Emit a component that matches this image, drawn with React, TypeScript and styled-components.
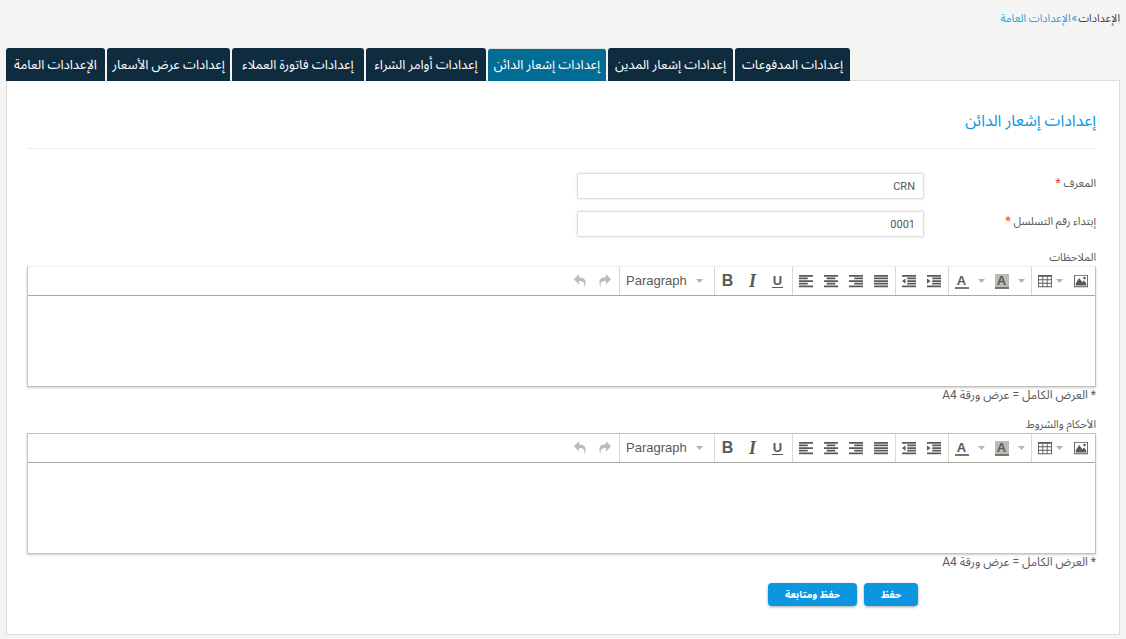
import React from "react";
import styled, { createGlobalStyle, css } from "styled-components";

const ink = "#595959";
const blue = "#0d96e0";

const GlobalStyle = createGlobalStyle`
  * { box-sizing: border-box; }
  body {
    margin: 0;
    background: #f4f4f2;
    color: ${ink};
    font-family: Roboto, "Noto Sans Arabic", "DejaVu Sans Condensed", "DejaVu Sans", sans-serif;
    font-size: 11px;
    line-height: 16px;
  }
  button, input, select, textarea { font: inherit; color: inherit; margin: 0; }
`;

const Page = styled.div`
  padding: 10px 6px 4px;
`;

const Breadcrumb = styled.nav`
  height: 38px;
  white-space: nowrap;
`;

const Crumb = styled.a<{ $current?: boolean }>`
  color: ${(p) => (p.$current ? "#2f9fe0" : "#444")};
  text-decoration: none;
`;

const Chevron = styled.span`
  color: #4a78c8;
  margin: 0 1px;
  font-size: 12px;
`;

const Tabs = styled.nav`
  display: flex;
  direction: ltr;
  gap: 2px;
  position: relative;
  margin-bottom: -1px;
`;

const Tab = styled.a<{ $width: number; $active?: boolean }>`
  display: flex;
  align-items: center;
  justify-content: center;
  direction: rtl;
  width: ${(p) => p.$width}px;
  height: 33px;
  border-radius: 3px 3px 0 0;
  background: ${(p) => (p.$active ? "#016d95" : "#0f2c3f")};
  ${(p) => p.$active && css`border-top: 1px solid #ddddd6;`}
  color: #fff;
  font-size: 13px;
  white-space: nowrap;
  text-decoration: none;
`;

const Panel = styled.main`
  background: #fff;
  border: 1px solid #ddddd6;
  padding: 27px 23px 28px 20px;
`;

const Title = styled.h1`
  margin: 0 0 24px;
  padding-bottom: 14px;
  border-bottom: 1px solid #ececec;
  color: ${blue};
  font-size: 16px;
  font-weight: 400;
  line-height: 26px;
`;

const Field = styled.div`
  display: grid;
  grid-template-columns: 172px 347px;
  margin-bottom: 12px;
`;

const Label = styled.label`
  display: block;
  padding-top: 2px;
`;

const Required = styled.span`
  color: #e8452c;
  font-size: 13px;
`;

const TextInput = styled.input`
  width: 100%;
  height: 26px;
  padding: 0 8px;
  border: 1px solid #ddd;
  border-radius: 2px;
  box-shadow: 0 0 3px rgba(0, 0, 0, 0.12);
  background: #fff;
`;

const EditorLabel = styled.label`
  display: block;
  height: 17px;
  line-height: 18px;
`;

const Editor = styled.section<{ $softTop?: boolean }>`
  border: 1px solid #c4c2ba;
  ${(p) => p.$softTop && css`border-top-color: #efefed;`}
  box-shadow: 0 1px 2px rgba(0, 0, 0, 0.2);
  direction: ltr;
`;

const Toolbar = styled.div`
  display: flex;
  justify-content: flex-end;
  height: 29px;
  border-bottom: 1px solid #a9a7a0;
`;

const Group = styled.div`
  display: flex;
  padding-right: 2px;
  & + & { border-left: 1px solid #d8d8d4; }
`;

const Tool = styled.button<{ $wide?: boolean }>`
  display: flex;
  align-items: center;
  justify-content: center;
  gap: 4px;
  width: ${(p) => (p.$wide ? 36 : 25)}px;
  padding: 0;
  border: 0;
  background: none;
  &:disabled { opacity: 0.4; }
`;

const CaretTool = styled(Tool)`
  width: 15px;
`;

const Letter = styled.span<{ $kind: "bold" | "italic" | "underline" }>`
  font-size: 16px;
  line-height: 18px;
  font-family: "Liberation Sans", sans-serif;
  font-weight: 700;
  ${(p) => p.$kind === "italic" && css`font-family: "Liberation Serif", serif; font-style: italic; font-size: 18px;`}
  ${(p) =>
    p.$kind === "underline" &&
    css`
      width: 11px;
      border-bottom: 1px solid ${ink};
      font-size: 13px;
      line-height: 12px;
      text-align: center;
    `}
`;

const ColorLetter = styled.span<{ $filled?: boolean }>`
  width: 14px;
  border-bottom: 2px solid #77756f;
  background: ${(p) => (p.$filled ? "#bdbab3" : "transparent")};
  font: 700 13px/13px "Liberation Sans", sans-serif;
`;

const FormatBox = styled.div`
  position: relative;
  display: flex;
  align-items: center;
  width: 92px;
`;

const FormatSelect = styled.select`
  appearance: none;
  width: 100%;
  height: 28px;
  padding: 0 6px;
  border: 0;
  background: none;
  font: 13px/20px "Liberation Sans", sans-serif;
`;

const FormatCaret = styled.span`
  position: absolute;
  right: 9px;
  display: flex;
  pointer-events: none;
`;

const Writing = styled.textarea`
  display: block;
  width: 100%;
  height: 90px;
  padding: 8px;
  border: 0;
  resize: none;
  direction: rtl;
`;

const Note = styled.p`
  margin: 0 0 12px;
  font-size: 12px;
  line-height: 17px;
`;

const Actions = styled.div`
  display: flex;
  gap: 7px;
  padding-right: 178px;
`;

const Action = styled.button<{ $width: number }>`
  width: ${(p) => p.$width}px;
  height: 23px;
  padding: 0;
  border: 0;
  border-radius: 4px;
  background: ${blue};
  box-shadow: 0 1px 3px rgba(0, 0, 0, 0.35);
  color: #fff;
  font-size: 10px;
  font-weight: 700;
  line-height: 16px;
`;

const paths = {
  undo: "M762 1024c113-204 132-516-314-506v250l-384-384 384-384v248c534-14 594 472 314 776z",
  redo: "M576 248v-248l384 384-384 384v-254c-446-10-427 302-314 506-280-304-220-790 314-776z",
  left: "M0 64h1024v128H0zM0 256h640v128H0zM0 448h1024v128H0zM0 640h640v128H0zM0 832h1024v128H0z",
  center: "M0 64h1024v128H0zM192 256h640v128H192zM0 448h1024v128H0zM192 640h640v128H192zM0 832h1024v128H0z",
  right: "M0 64h1024v128H0zM384 256h640v128H384zM0 448h1024v128H0zM384 640h640v128H384zM0 832h1024v128H0z",
  justify: "M0 64h1024v128H0zM0 256h1024v128H0zM0 448h1024v128H0zM0 640h1024v128H0zM0 832h1024v128H0z",
  outdent: "M0 64h1024v128H0zM384 256h640v128H384zM384 448h640v128H384zM384 640h640v128H384zM0 832h1024v128H0zM256 320v384L0 512z",
  indent: "M0 64h1024v128H0zM384 256h640v128H384zM384 448h640v128H384zM384 640h640v128H384zM0 832h1024v128H0zM0 320v384l256-192z",
  table: "M0 64v896h1024V64H0zm320 576H64V448h256v192zm64-192h256v192H384V448zm256-64H384V192h256v192zm-320-192v192H64V192h256zM64 704h256v192H64V704zm320 192V704h256v192H384zm320 0V704h256v192H704zm256-256H704V448h256v192zm0-256H704V192h256v192z",
  image: "M0 64v896h1024V64H0zm960 832H64V128h896v768zM128 832h768V672L736 480 608 608 384 288 128 672zM768 192a96 96 0 1 0 0 192 96 96 0 0 0 0-192z",
};

type IconName = keyof typeof paths;

const Icon = ({ name }: { name: IconName }) => (
  <svg width="14" height="14" viewBox="0 0 1024 1024" fill={ink} aria-hidden="true">
    <path d={paths[name]} />
  </svg>
);

const Caret = () => (
  <svg width="7" height="4" viewBox="0 0 7 4" fill="#aeb5b3" aria-hidden="true">
    <path d="M0 0h7L3.5 4z" />
  </svg>
);

const IconTool = ({ name, label, disabled }: { name: IconName; label: string; disabled?: boolean }) => (
  <Tool type="button" aria-label={label} disabled={disabled}>
    <Icon name={name} />
  </Tool>
);

const RichEditor = ({ id, softTop }: { id: string; softTop?: boolean }) => (
  <Editor $softTop={softTop}>
    <Toolbar role="toolbar">
      <Group>
        <IconTool name="undo" label="Undo" disabled />
        <IconTool name="redo" label="Redo" disabled />
      </Group>
      <Group>
        <FormatBox>
          <FormatSelect aria-label="Format" defaultValue="p">
            <option value="p">Paragraph</option>
          </FormatSelect>
          <FormatCaret><Caret /></FormatCaret>
        </FormatBox>
      </Group>
      <Group>
        <Tool type="button"><Letter $kind="bold">B</Letter></Tool>
        <Tool type="button"><Letter $kind="italic">I</Letter></Tool>
        <Tool type="button"><Letter $kind="underline">U</Letter></Tool>
      </Group>
      <Group>
        <IconTool name="left" label="Align left" />
        <IconTool name="center" label="Align center" />
        <IconTool name="right" label="Align right" />
        <IconTool name="justify" label="Justify" />
      </Group>
      <Group>
        <IconTool name="outdent" label="Decrease indent" />
        <IconTool name="indent" label="Increase indent" />
      </Group>
      <Group>
        <Tool type="button"><ColorLetter>A</ColorLetter></Tool>
        <CaretTool type="button" aria-label="Text color"><Caret /></CaretTool>
        <Tool type="button"><ColorLetter $filled>A</ColorLetter></Tool>
        <CaretTool type="button" aria-label="Background color"><Caret /></CaretTool>
      </Group>
      <Group>
        <Tool type="button" aria-label="Table" $wide>
          <Icon name="table" />
          <Caret />
        </Tool>
        <IconTool name="image" label="Image" />
      </Group>
    </Toolbar>
    <Writing id={id} />
  </Editor>
);

const tabs = [
  { text: "الإعدادات العامة", width: 99 },
  { text: "إعدادات عرض الأسعار", width: 123 },
  { text: "إعدادات فاتورة العملاء", width: 132 },
  { text: "إعدادات أوامر الشراء", width: 120 },
  { text: "إعدادات إشعار الدائن", width: 118, active: true },
  { text: "إعدادات إشعار المدين", width: 125 },
  { text: "إعدادات المدفوعات", width: 115 },
];

export default function App() {
  return (
    <Page dir="rtl" lang="ar">
      <GlobalStyle />
      <Breadcrumb>
        <Crumb href="#settings">الإعدادات</Crumb>
        <Chevron>»</Chevron>
        <Crumb href="#general" $current>الإعدادات العامة</Crumb>
      </Breadcrumb>
      <Tabs>
        {tabs.map((t) => (
          <Tab key={t.text} href="#tab" $width={t.width} $active={t.active}>{t.text}</Tab>
        ))}
      </Tabs>
      <Panel>
        <Title>إعدادات إشعار الدائن</Title>
        <form>
          <Field>
            <Label htmlFor="prefix">المعرف <Required>*</Required></Label>
            <TextInput id="prefix" defaultValue="CRN" />
          </Field>
          <Field>
            <Label htmlFor="start">إبتداء رقم التسلسل <Required>*</Required></Label>
            <TextInput id="start" defaultValue="0001" />
          </Field>
          <EditorLabel htmlFor="notes">الملاحظات</EditorLabel>
          <RichEditor id="notes" softTop />
          <Note>* العرض الكامل = عرض ورقة A4</Note>
          <EditorLabel htmlFor="terms">الأحكام والشروط</EditorLabel>
          <RichEditor id="terms" />
          <Note>* العرض الكامل = عرض ورقة A4</Note>
          <Actions>
            <Action type="button" $width={54}>حفظ</Action>
            <Action type="button" $width={89}>حفظ ومتابعة</Action>
          </Actions>
        </form>
      </Panel>
    </Page>
  );
}
